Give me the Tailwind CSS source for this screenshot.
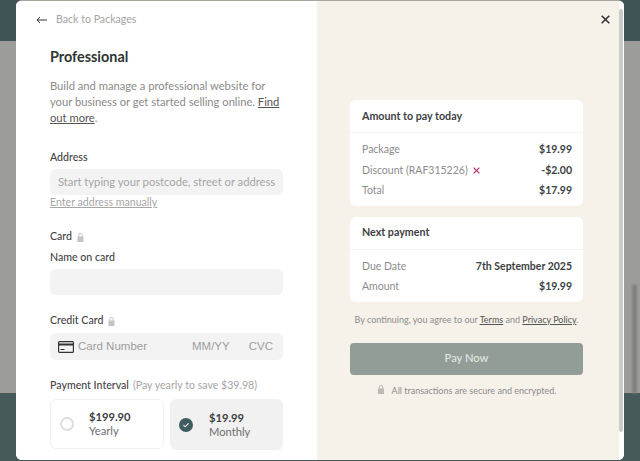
<!DOCTYPE html>
<html lang="en">

<head>
    <meta charset="UTF-8">
    <title>Checkout</title>
    <script src="https://cdn.jsdelivr.net/npm/@tailwindcss/browser@4"></script>
</head>

<body class="h-[461px] w-[640px] overflow-hidden bg-[#9c9c9a] font-['Lato',sans-serif]">
    <div class="relative h-[461px] w-[640px] overflow-hidden">
        <!-- Page behind the modal -->
        <div class="flex h-full flex-col">
            <div class="h-[41px] bg-[#3f5555]"></div>
            <div class="flex flex-1 justify-end bg-[#9c9c9a] pr-[3px]">
                <div class="mt-[244px] w-[5px] bg-[#808080] blur-[1px]"></div>
            </div>
            <div class="h-[68px] bg-[#465a59]"></div>
        </div>

        <!-- Modal -->
        <div class="absolute left-[16px] top-0 flex h-[460px] w-[608px] overflow-hidden rounded-[6px] border-t border-[#a9a6a0] bg-white">
            <!-- Left column -->
            <div class="w-[301px] shrink-0 bg-white">
                <a class="ml-[20px] mt-[12px] flex h-[14px] items-center gap-[9px] text-[10.6px] text-[#a3a3a3]">
                    <svg class="h-[10px] w-[11px]" viewBox="0 0 11 10" fill="none" stroke="#333" stroke-width="1">
                        <path d="M11 5H1M4 2 1 5l3 3" />
                    </svg>
                    <span>Back to Packages</span>
                </a>

                <div class="px-[34px]">
                    <h1 class="mt-[20px] text-[14.4px] leading-[20px] font-bold text-[#2f3535]">Professional</h1>
                    <p class="mt-[11px] text-[11.2px] leading-[16px] text-[#8a8a8a]">Build and manage a professional website for your business or get started selling online. <a class="text-[#555] underline">Find out more</a>.</p>

                    <label class="mt-[24px] block text-[10.6px] leading-[14px] font-medium text-[#444]">Address</label>
                    <div class="mt-[5px] flex h-[26px] items-center rounded-[6px] bg-[#f3f3f3] px-[8px] text-[11.2px] whitespace-nowrap text-[#a5a5a5]">Start typing your postcode, street or address</div>
                    <a class="mt-0 block text-[10.6px] leading-[14px] text-[#a5a5a5] underline">Enter address manually</a>

                    <div class="mt-[21px] flex h-[14px] items-center gap-[5px] text-[10.6px] font-medium text-[#444]">
                        <span>Card</span>
                        <svg class="h-[9px] w-[7px]" viewBox="0 0 7 9" fill="#c4c4c4"><path d="M1.2 3.5V2.4a2.3 2.3 0 0 1 4.6 0v1.1h.7V9H.5V3.5Zm1 0h2.6V2.4a1.3 1.3 0 0 0-2.6 0Z" /></svg>
                    </div>
                    <label class="mt-[6px] block text-[10.6px] leading-[14px] font-medium text-[#444]">Name on card</label>
                    <div class="mt-[5px] h-[26px] rounded-[6px] bg-[#f3f3f3]"></div>

                    <div class="mt-[19px] flex h-[14px] items-center gap-[5px] text-[10.6px] font-medium text-[#444]">
                        <span>Credit Card</span>
                        <svg class="h-[9px] w-[7px]" viewBox="0 0 7 9" fill="#c4c4c4"><path d="M1.2 3.5V2.4a2.3 2.3 0 0 1 4.6 0v1.1h.7V9H.5V3.5Zm1 0h2.6V2.4a1.3 1.3 0 0 0-2.6 0Z" /></svg>
                    </div>
                    <div class="mt-[5px] flex h-[27px] items-center rounded-[6px] bg-[#f3f3f3] pr-[10px] pl-[8px] font-['Liberation_Sans',sans-serif] text-[11.5px] text-[#9d9d9d]">
                        <svg class="mr-[4px] h-[12px] w-[16px]" viewBox="0 0 16 12" fill="none" stroke="#333">
                            <rect x=".6" y=".6" width="14.8" height="10.8" rx="1" stroke-width="1.2" />
                            <path d="M.6 3.5h14.8" stroke-width="2.2" />
                            <path d="M2.5 8.5h4" stroke-width="1" />
                        </svg>
                        <span>Card Number</span>
                        <span class="ml-auto">MM/YY</span>
                        <span class="ml-[19px]">CVC</span>
                    </div>

                    <div class="mt-[19px] flex h-[14px] items-center gap-[4px] whitespace-nowrap text-[10.6px]">
                        <span class="font-medium text-[#444]">Payment Interval</span>
                        <span class="text-[#a5a5a5]">(Pay yearly to save $39.98)</span>
                    </div>
                    <div class="mt-[6px] flex gap-[6px]">
                        <div class="flex h-[50px] w-[114px] items-center rounded-[6px] border border-[#f0f0f0] bg-white">
                            <span class="ml-[9px] h-[14px] w-[14px] rounded-full border-2 border-[#dedede]"></span>
                            <div class="ml-[15px] text-[11.2px] leading-[14px]">
                                <div class="font-bold text-[#3a4040]">$199.90</div>
                                <div class="text-[#6d6d6d]">Yearly</div>
                            </div>
                        </div>
                        <div class="flex h-[51px] flex-1 items-center rounded-[6px] bg-[#f1f1f1]">
                            <span class="ml-[9px] flex h-[14px] w-[14px] items-center justify-center rounded-full bg-[#3f5d60]">
                                <svg class="h-[8px] w-[8px]" viewBox="0 0 8 8" fill="none" stroke="#fff" stroke-width="1.1"><path d="m1.5 4.2 1.7 1.6 3.3-3.5" /></svg>
                            </span>
                            <div class="ml-[16px] text-[11.2px] leading-[14px]">
                                <div class="font-bold text-[#3a4040]">$19.99</div>
                                <div class="text-[#6d6d6d]">Monthly</div>
                            </div>
                        </div>
                    </div>
                </div>
            </div>

            <!-- Right column -->
            <div class="relative flex-1 bg-[#f6f2ea] pt-[99px] pr-[41px] pl-[33px]">
                <svg class="absolute right-[14px] top-[14px] h-[9px] w-[9px]" viewBox="0 0 9 9" stroke="#333" stroke-width="1.6"><path d="m.7.7 7.6 7.6M8.3.7.7 8.3" /></svg>

                <div class="rounded-[6px] bg-white">
                    <div class="flex h-[33px] items-center border-b border-[#f6f4f0] px-[12px] text-[10.7px] font-bold text-[#3b4141]">Amount to pay today</div>
                    <div class="flex flex-col gap-[3px] pt-[8px] pr-[11px] pb-[6px] pl-[12px] text-[10.5px] leading-[17.5px]">
                        <div class="flex justify-between"><span class="text-[#8c8c8c]">Package</span><span class="font-bold text-[#3b4141]">$19.99</span></div>
                        <div class="flex justify-between">
                            <span class="flex items-center gap-[5px] text-[#8c8c8c]">Discount (RAF315226)
                                <svg class="h-[7px] w-[7px]" viewBox="0 0 7 7" stroke="#b0336b" stroke-width="1.2"><path d="m.6.6 5.8 5.8M6.4.6.6 6.4" /></svg>
                            </span>
                            <span class="font-bold text-[#3b4141]">-$2.00</span>
                        </div>
                        <div class="flex justify-between"><span class="text-[#8c8c8c]">Total</span><span class="font-bold text-[#3b4141]">$17.99</span></div>
                    </div>
                </div>

                <div class="mt-[11px] rounded-[6px] bg-white">
                    <div class="flex h-[33px] items-center border-b border-[#f6f4f0] px-[12px] text-[10.7px] font-bold text-[#3b4141]">Next payment</div>
                    <div class="flex flex-col gap-[3px] pt-[8px] pr-[11px] pb-[6px] pl-[12px] text-[10.5px] leading-[17.5px]">
                        <div class="flex justify-between"><span class="text-[#8c8c8c]">Due Date</span><span class="font-bold text-[#3b4141]">7th September 2025</span></div>
                        <div class="flex justify-between"><span class="text-[#8c8c8c]">Amount</span><span class="font-bold text-[#3b4141]">$19.99</span></div>
                    </div>
                </div>

                <p class="mt-[11px] text-center text-[9px] leading-[13px] whitespace-nowrap text-[#8c8c8c]">By continuing, you agree to our <a class="text-[#555] underline">Terms</a> and <a class="text-[#555] underline">Privacy Policy</a>.</p>

                <button class="mt-[17px] h-[32px] w-full rounded-[4px] bg-[#929d97] text-[11.2px] font-medium text-[#e3e6e2]">Pay Now</button>

                <div class="mt-[9px] flex items-center justify-center gap-[7px] text-[9px] leading-[13px] text-[#8c8c8c]">
                    <svg class="mb-[2px] h-[9px] w-[8px]" viewBox="0 0 7 9" fill="#bdbab5"><path d="M1.2 3.5V2.4a2.3 2.3 0 0 1 4.6 0v1.1h.7V9H.5V3.5Zm1 0h2.6V2.4a1.3 1.3 0 0 0-2.6 0Z" /></svg>
                    <span>All transactions are secure and encrypted.</span>
                </div>

                <!-- Scrollbar -->
                <div class="absolute right-0 top-0 flex h-full w-[5px] flex-col bg-white">
                    <div class="mt-[8px] h-[423px] w-[4px] rounded-full bg-[#c9cccd]"></div>
                </div>
            </div>
        </div>
    </div>
</body>

</html>
